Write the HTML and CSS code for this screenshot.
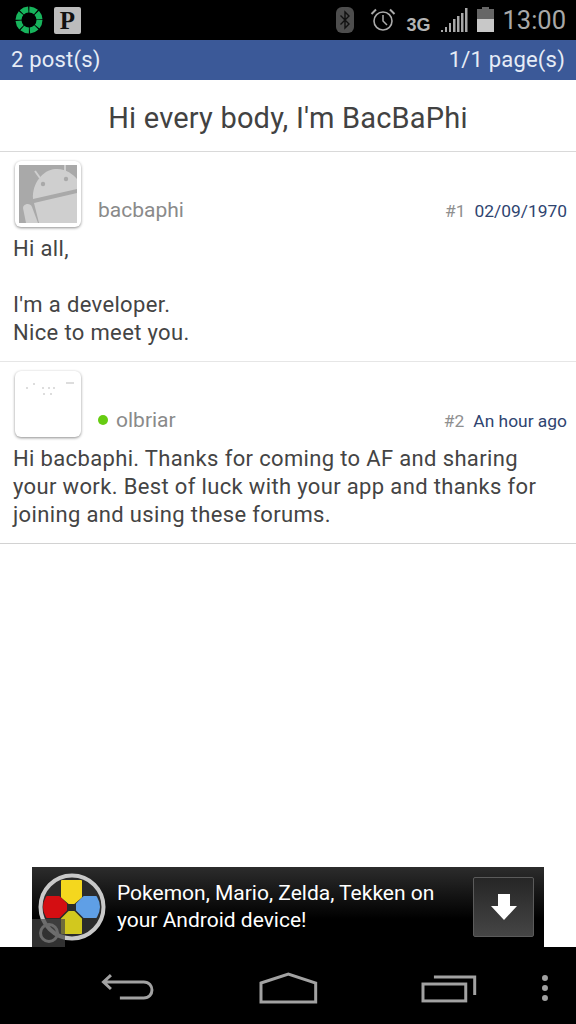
FILE: index.html
```html
<!DOCTYPE html>
<html lang="en">
<head>
<meta charset="utf-8">
<title>Thread</title>
<link rel="stylesheet" href="styles.css">
</head>
<body>
<div class="phone">
  <header class="status">
    <div class="status-left">
      <svg class="ic-ring" width="30" height="30" viewBox="0 0 30 30"><circle cx="15" cy="15" r="10.500" fill="none" stroke="#17b45c" stroke-width="6" stroke-dasharray="7.200 1.050"/></svg>
      <span class="p-badge">P</span>
    </div>
    <div class="status-right">
      <svg class="ic-bt" width="18" height="26" viewBox="0 0 18 26"><rect width="18" height="26" rx="6" fill="#4d4d4d"/><path d="M4.500 8.500 13 17l-4 4V5l4 4-8.500 8.500" fill="none" stroke="#111" stroke-width="1.400"/></svg>
      <svg class="ic-alarm" width="26" height="26" viewBox="0 0 26 26"><circle cx="13" cy="14" r="9" fill="none" stroke="#ababab" stroke-width="1.600"/><path d="M13 8v6l4 4" fill="none" stroke="#ababab" stroke-width="1.500"/><path d="M1.500 7 6 2.500M24.500 7 20 2.500" fill="none" stroke="#ababab" stroke-width="2"/></svg>
      <span class="net">3G</span>
      <svg class="ic-signal" width="28" height="26" viewBox="0 0 28 26"><g fill="#a8a8a8"><rect x="1" y="23" width="2" height="2"/><rect x="5" y="20" width="2" height="5"/><rect x="9" y="16" width="2" height="9"/><rect x="13" y="12" width="2.500" height="13"/><rect x="17" y="9" width="2.500" height="16"/><rect x="21" y="6" width="2.500" height="19"/><rect x="25" y="1" width="2.500" height="24"/></g></svg>
      <svg class="ic-batt" width="17" height="26" viewBox="0 0 17 26"><rect x="5" y="0" width="7" height="3" fill="#666"/><rect x="0" y="2" width="17" height="10" fill="#666"/><rect x="0" y="12" width="17" height="13" fill="#c8c8c8"/></svg>
      <span class="clock">13:00</span>
    </div>
  </header>

  <div class="pager">
    <span>2 post(s)</span>
    <span>1/1 page(s)</span>
  </div>

  <main class="content">
    <h1 class="title">Hi every body, I'm BacBaPhi</h1>

    <article class="post post-first">
      <div class="post-head">
        <div class="avatar">
          <svg width="58" height="58" viewBox="0 0 58 58"><rect width="58" height="58" fill="#a9a9a9"/><path d="M16 6 21 13M46 0V7" stroke="#cfcfcf" stroke-width="2" fill="none"/><path d="M14 34C13 18 24 5 36 4 46 3 54 9 58 14V24z" fill="#cfcfcf"/><circle cx="24" cy="19" r="2.200" fill="#a9a9a9"/><circle cx="47" cy="14" r="2.200" fill="#a9a9a9"/><path d="M15 38 58 28V58H20z" fill="#cfcfcf"/><path d="M4 43c0-4 7-6 9-1l6 16H7z" fill="#cfcfcf"/></svg>
        </div>
        <span class="author">bacbaphi</span>
        <span class="meta"><span class="num">#1</span><span class="date">02/09/1970</span></span>
      </div>
      <p class="body">Hi all,<br><br>I'm a developer.<br>Nice to meet you.</p>
    </article>

    <article class="post post-last">
      <div class="post-head">
        <div class="avatar">
          <svg width="58" height="58" viewBox="0 0 58 58"><rect width="58" height="58" fill="#fff"/><path d="M7 13h2M14 9h2M23 13h2M29 13h2M34 13h2M47 8h8M24 19h2M31 19h2" stroke="#bbb" stroke-width="1" fill="none"/></svg>
        </div>
        <span class="online"></span>
        <span class="author author-on">olbriar</span>
        <span class="meta"><span class="num">#2</span><span class="date">An hour ago</span></span>
      </div>
      <p class="body">Hi bacbaphi. Thanks for coming to AF and sharing your work. Best of luck with your app and thanks for joining and using these forums.</p>
    </article>
  </main>

  <aside class="ad">
    <div class="ad-logo">
      <svg width="68" height="68" viewBox="0 0 68 68">
        <circle cx="34" cy="34" r="31.500" fill="#2b2b2b" stroke="#c9c9c9" stroke-width="4"/>
        <g stroke-width="2" stroke-linejoin="round">
          <path d="M24 8H43V24L36 30H31L24 24z" fill="#f4d71e" stroke="#f4d71e"/>
          <path d="M24 60H43V46L36 39H31L24 46z" fill="#d2c81e" stroke="#d2c81e"/>
          <path d="M28 31V37L21 44H9Q6 39 6 34 6 29 9 24H21z" fill="#d40e12" stroke="#d40e12"/>
          <path d="M39 31V37L46 44H58Q61 39 61 34 61 29 58 24H46z" fill="#5f9fe6" stroke="#5f9fe6"/>
        </g>
      </svg>
      <span class="ad-info"><span class="ad-info-i"></span></span>
    </div>
    <p class="ad-text">Pokemon, Mario, Zelda, Tekken on<br>your Android device!</p>
    <div class="ad-btn">
      <svg width="28" height="28" viewBox="0 0 28 28"><path d="M8 1h12v12h7L14 27 1 13h7z" fill="#fff"/></svg>
    </div>
  </aside>

  <nav class="navbar">
    <svg class="nav-back" width="56" height="32" viewBox="0 0 56 32"><path d="M10 3 2.500 10 10 17M3 10H43c11 0 11 16 0 16H19" fill="none" stroke="#a2a2a2" stroke-width="3"/></svg>
    <svg class="nav-home" width="60" height="32" viewBox="0 0 60 32"><path d="M2 11 29.500 2 57 11V30H2z" fill="none" stroke="#a2a2a2" stroke-width="3"/></svg>
    <svg class="nav-recent" width="56" height="32" viewBox="0 0 56 32"><rect x="2" y="12" width="43" height="17" fill="none" stroke="#a2a2a2" stroke-width="3"/><path d="M13 5H54V23" fill="none" stroke="#a2a2a2" stroke-width="3"/></svg>
    <svg class="nav-more" width="8" height="28" viewBox="0 0 8 28"><circle cx="4" cy="4" r="3" fill="#a2a2a2"/><circle cx="4" cy="14" r="3" fill="#a2a2a2"/><circle cx="4" cy="24" r="3" fill="#a2a2a2"/></svg>
  </nav>
</div>
</body>
</html>
```
FILE: styles.css
```css
* { box-sizing: border-box; }
html, body { margin: 0; padding: 0; background: #fff; }
body { font-family: Roboto, "Noto Sans", sans-serif; }
.phone { width: 576px; height: 1024px; display: flex; flex-direction: column; overflow: hidden; background: #fff; }

.status { height: 40px; flex: none; background: #000; display: flex; justify-content: space-between; align-items: center; padding: 0 10px 0 14px; }
.status-left { display: flex; align-items: center; gap: 10px; }
.ic-ring { display: block; }
.p-badge { width: 27px; height: 27px; background: #bcbcbc; border-radius: 2px; color: #111; font: bold 25px/28px "Liberation Serif", serif; text-align: center; }
.status-right { display: flex; align-items: center; }
.status-right svg { display: block; }
.ic-bt { margin-right: 16px; }
.ic-alarm { margin-right: 10px; }
.net { color: #b4b4b4; font: bold 18px/24px "Liberation Sans", sans-serif; margin: 9px 10px 0 0; }
.ic-signal { margin-right: 9px; }
.ic-batt { margin-right: 8px; }
.clock { color: #a8a8a8; font-size: 25.500px; line-height: 30px; }

.pager { height: 40px; flex: none; background: #3b5998; color: #e6ecf6; font-size: 22px; letter-spacing: 0.200px; display: flex; justify-content: space-between; align-items: center; padding: 0 11px 2px; }

.content { flex: 1; min-height: 0; }
.title { margin: 0; height: 72px; font-weight: 400; font-size: 29px; letter-spacing: 0.200px; line-height: 76px; color: #424242; text-align: center; border-bottom: 1px solid #d9d9d9; }

.post { padding: 0 9px 0 13px; }
.post-first { height: 210px; border-bottom: 1px solid #e6e6e6; }
.post-last { height: 182px; border-bottom: 1px solid #d2d2d2; }
.post-head { height: 82px; display: flex; align-items: flex-end; padding: 0 0 4px 2px; }
.avatar { width: 66px; height: 66px; flex: none; padding: 4px; background: #fff; border-radius: 6px; box-shadow: 0 1px 3px rgba(0,0,0,.45); margin-bottom: 3px; }
.avatar svg { display: block; }
.author { color: #8a8a8a; font-size: 21px; line-height: 26px; margin: 0 0 7px 17px; }
.author-on { margin-left: 8px; }
.online { width: 10px; height: 10px; border-radius: 50%; background: #66cc11; margin: 0 0 15px 17px; }
.meta { margin: 0 0 6px auto; display: flex; gap: 9px; font-size: 17.400px; line-height: 26px; }
.num { color: #8f8f8f; }
.date { color: #2f4470; }
.body { margin: 1px 0 0; padding-right: 20px; color: #444; font-size: 22px; letter-spacing: 0.350px; line-height: 28px; }

.ad { height: 80px; flex: none; width: 512px; margin: 0 32px; background: linear-gradient(#2c2c2c, #000 65%); display: flex; align-items: center; position: relative; }
.ad-logo { width: 68px; height: 68px; margin-left: 6px; flex: none; }
.ad-logo svg { display: block; }
.ad-info { position: absolute; left: 0; bottom: 0; width: 33px; height: 28px; background: rgba(70,70,70,.7); display: flex; align-items: center; justify-content: center; }
.ad-info-i { width: 20px; height: 20px; border: 3px solid #6a6a6a; border-radius: 50%; }
.ad-text { margin: 0 0 0 11px; color: #fff; font-size: 21px; line-height: 27px; white-space: nowrap; }
.ad-btn { position: absolute; right: 10px; top: 10px; width: 61px; height: 60px; border: 1px solid #5b5b5b; border-radius: 2px; background: linear-gradient(#262626, #454545); display: flex; align-items: center; justify-content: center; }

.navbar { height: 77px; flex: none; background: #000; display: flex; align-items: center; padding: 4px 27px 0 101px; }
.nav-home { margin-left: 102px; }
.nav-recent { margin-left: 103px; }
.nav-more { margin-left: 64px; }
```
